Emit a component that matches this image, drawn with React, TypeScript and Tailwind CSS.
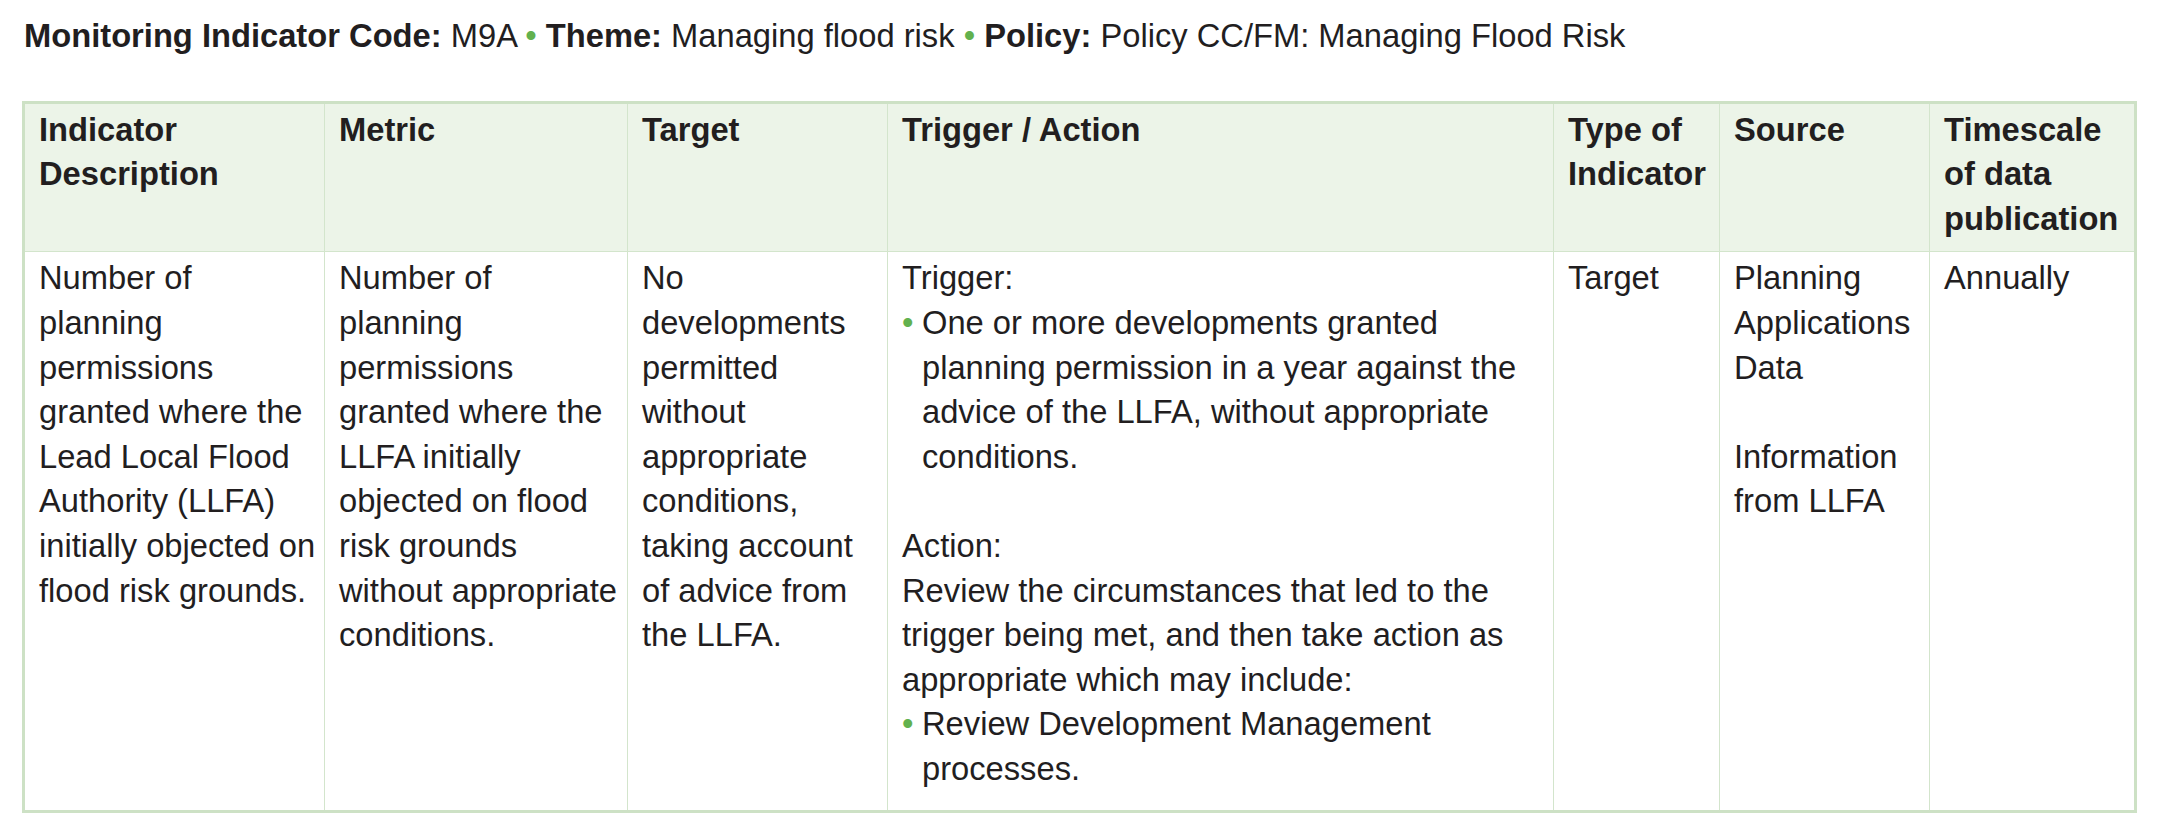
const headers = [
  "Indicator Description",
  "Metric",
  "Target",
  "Trigger / Action",
  "Type of Indicator",
  "Source",
  "Timescale of data publication",
]

function Dot() {
  return <span className="text-[#62b14e]">•</span>
}

function Bullet({ children }: { children: React.ReactNode }) {
  return (
    <li className="flex">
      <span className="w-[20px] shrink-0 text-[#62b14e]">•</span>
      <span>{children}</span>
    </li>
  )
}

export default function App() {
  const cell = "pl-[14px] pr-[6px] border-[#d3e5cc]"

  return (
    <div
      className="bg-white pl-[22px] pt-[14px] text-[32.7px] leading-[44.6px] text-[#221e1f]"
      style={{ fontFamily: '"Liberation Sans", Arial, sans-serif' }}
    >
      <p className="mb-[42px] pl-[2px]">
        <b>Monitoring Indicator Code:</b> M9A <Dot /> <b>Theme:</b> Managing flood risk <Dot />{" "}
        <b>Policy:</b> Policy CC/FM: Managing Flood Risk
      </p>

      <div className="w-[2115px] border-[3px] border-[#cde1c5]">
        <div className="grid grid-cols-[300px_303px_260px_666px_166px_210px_204px]">
          {headers.map((h, i) => (
            <div
              key={h}
              className={`${cell} bg-[#ecf4e8] pt-[4px] pb-[10px] font-bold border-b ${
                i < headers.length - 1 ? "border-r" : ""
              }`}
            >
              {h}
            </div>
          ))}

          <div className={`${cell} pt-[4px] pb-[18px] border-r`}>
            Number of planning permissions granted where the Lead Local Flood Authority (LLFA) initially
            objected on flood risk grounds.
          </div>
          <div className={`${cell} pt-[4px] pb-[18px] border-r`}>
            Number of planning permissions granted where the LLFA initially objected on flood risk grounds
            without appropriate conditions.
          </div>
          <div className={`${cell} pt-[4px] pb-[18px] border-r`}>
            No developments permitted without appropriate conditions, taking account of advice from the
            LLFA.
          </div>
          <div className={`${cell} pt-[4px] pb-[18px] border-r`}>
            <p>Trigger:</p>
            <ul>
              <Bullet>
                One or more developments granted planning permission in a year against the advice of the
                LLFA, without appropriate conditions.
              </Bullet>
            </ul>
            <p className="mt-[44.6px]">Action:</p>
            <p>
              Review the circumstances that led to the trigger being met, and then take action as
              appropriate which may include:
            </p>
            <ul>
              <Bullet>Review Development Management processes.</Bullet>
            </ul>
          </div>
          <div className={`${cell} pt-[4px] pb-[18px] border-r`}>Target</div>
          <div className={`${cell} pt-[4px] pb-[18px] border-r`}>
            <p>Planning Applications Data</p>
            <p className="mt-[44.6px]">Information from LLFA</p>
          </div>
          <div className={`${cell} pt-[4px] pb-[18px]`}>Annually</div>
        </div>
      </div>
    </div>
  )
}
